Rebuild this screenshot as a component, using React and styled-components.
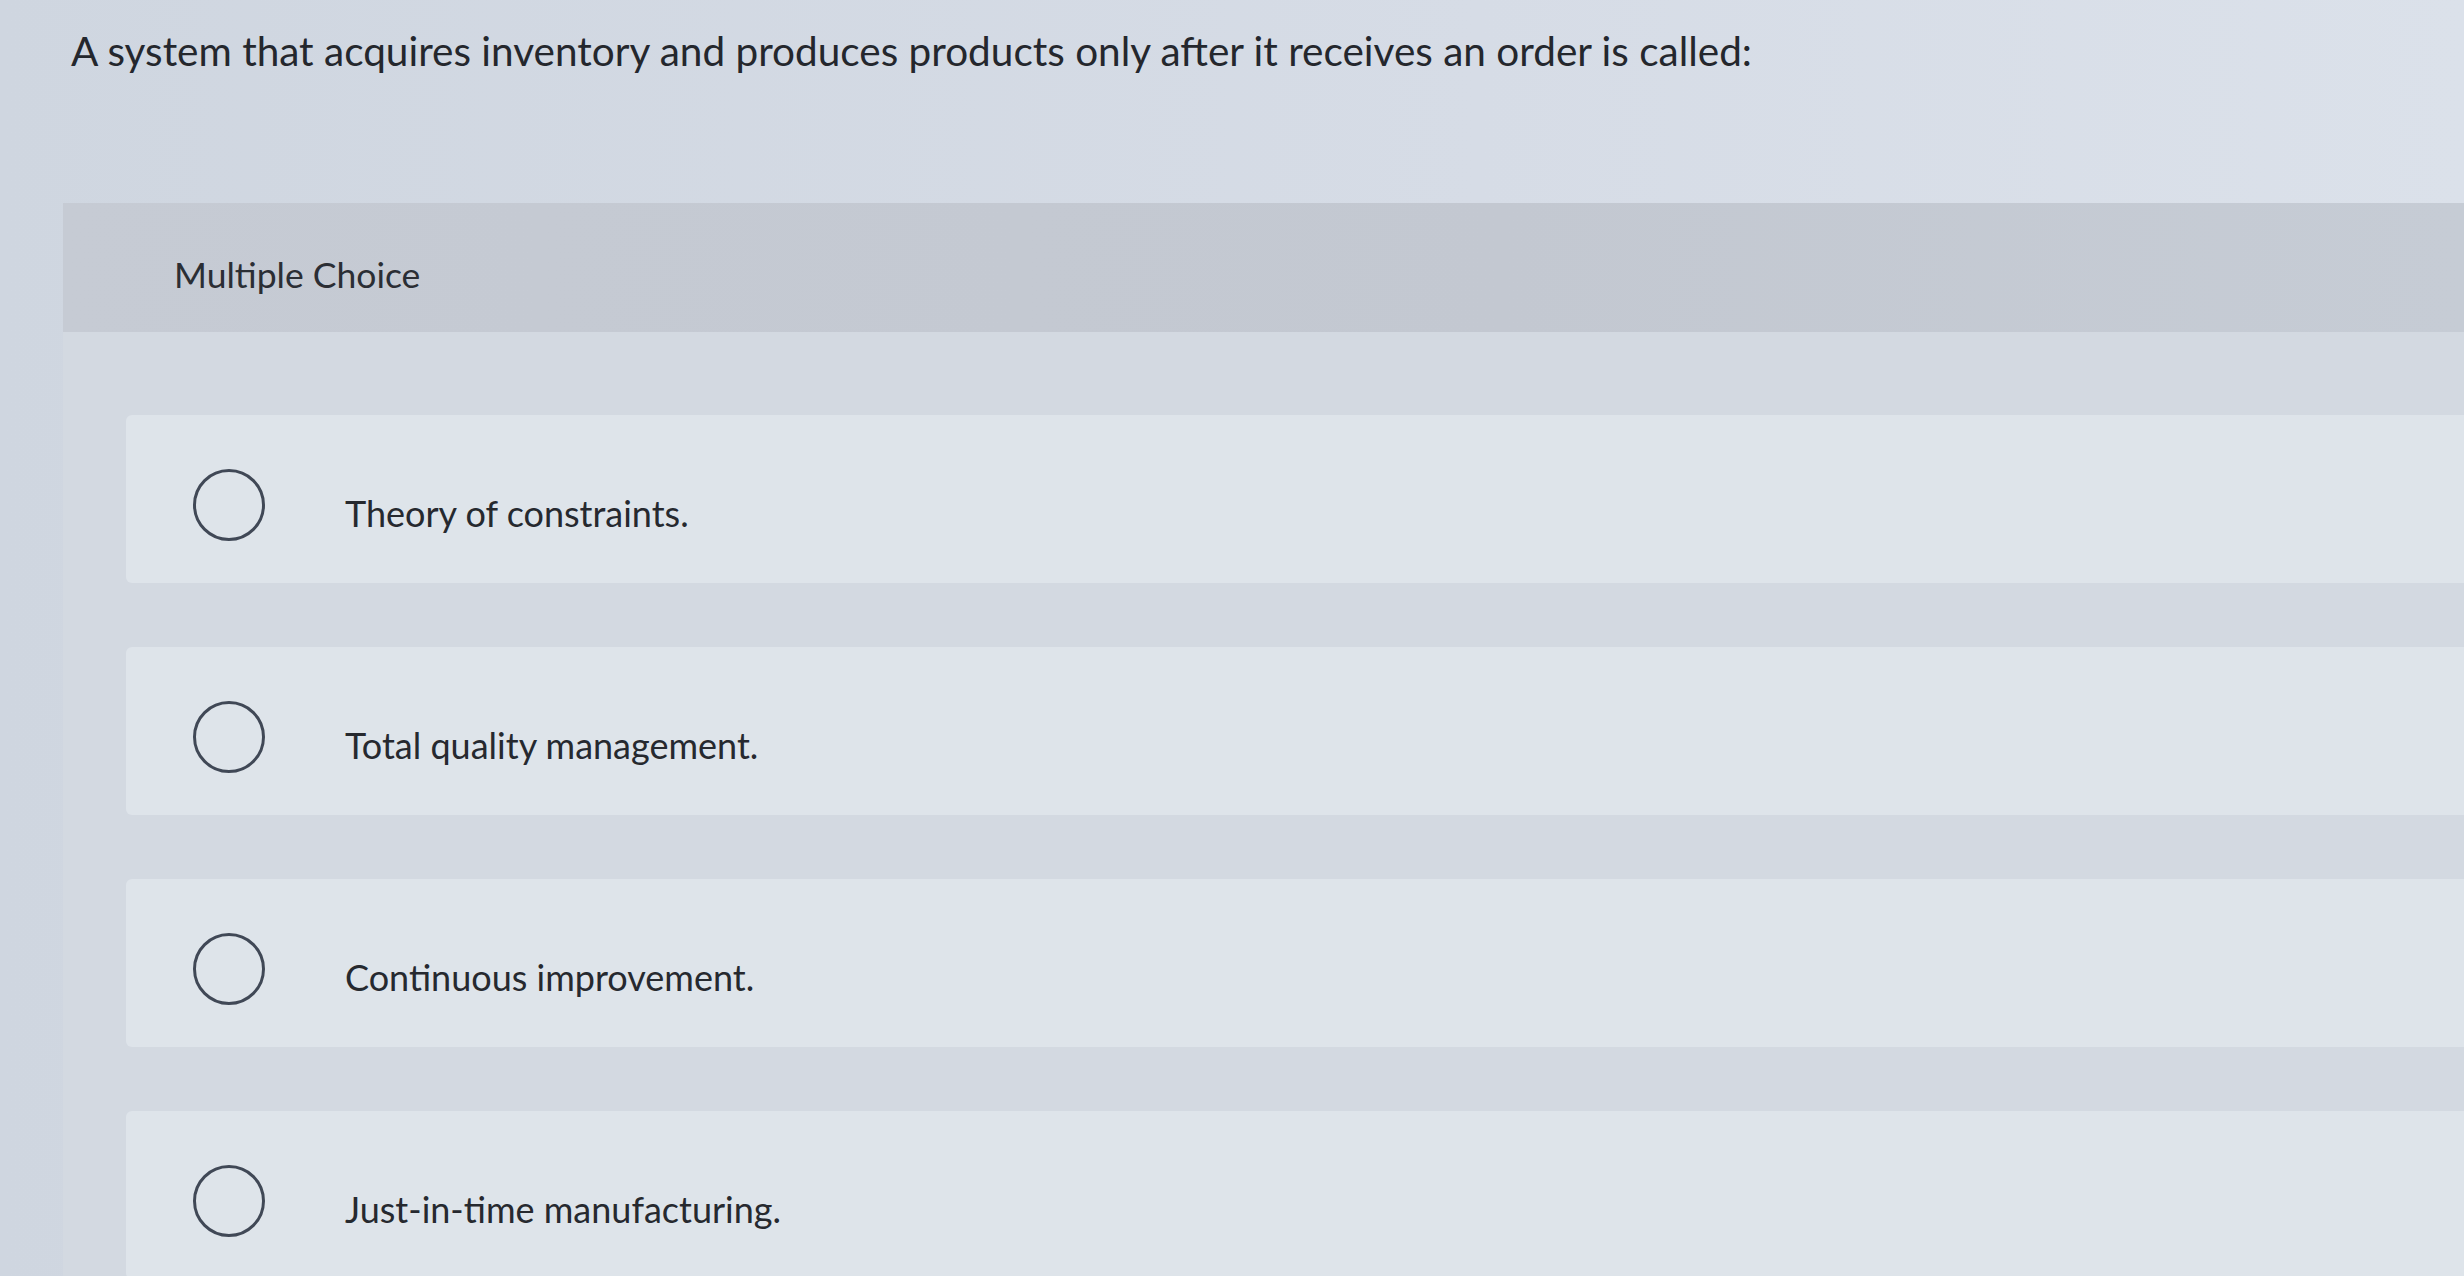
import styled, { createGlobalStyle } from "styled-components";

const GlobalStyle = createGlobalStyle`
  html, body {
    margin: 0;
    padding: 0;
    background: #d2d8e2;
    font-family: Lato, "Open Sans", "Liberation Sans", sans-serif;
    color: #2b2e34;
    overflow: hidden;
  }
`;

const options = [
  "Theory of constraints.",
  "Total quality management.",
  "Continuous improvement.",
  "Just-in-time manufacturing.",
];

export default function App() {
  return (
    <>
      <GlobalStyle />
      <Page>
        <Question>
          A system that acquires inventory and produces products only after it
          receives an order is called:
        </Question>
        <Panel>
          <PanelHeader>Multiple Choice</PanelHeader>
          <OptionList>
            {options.map((label) => (
              <OptionCard key={label}>
                <Radio />
                <OptionLabel>{label}</OptionLabel>
              </OptionCard>
            ))}
          </OptionList>
        </Panel>
      </Page>
    </>
  );
}

const Page = styled.main`
  width: 100vw;
  height: 100vh;
  box-sizing: border-box;
  padding: 29px 0 0 63px;
  display: flex;
  flex-direction: column;
  background: linear-gradient(90deg, #cfd6e0 0%, #d6dce6 60%, #dbe1ea 100%);
`;

const Question = styled.h1`
  margin: 0 0 130px 8px;
  font-size: 40.5px;
  line-height: 44px;
  font-weight: 400;
  color: #24272d;
  white-space: nowrap;
`;

const Panel = styled.section`
  display: flex;
  flex-direction: column;
  background: #d3d9e1;
  flex: 1;
`;

const PanelHeader = styled.div`
  height: 129px;
  box-sizing: border-box;
  padding: 13px 0 0 111px;
  display: flex;
  align-items: center;
  background: linear-gradient(90deg, #c6cbd4 0%, #c3c8d1 60%, #c6ccd5 100%);
  font-size: 35.5px;
  color: #2b2e34;
`;

const OptionList = styled.div`
  display: flex;
  flex-direction: column;
  gap: 64px;
  padding: 83px 0 0 63px;
`;

const OptionCard = styled.div`
  height: 168px;
  box-sizing: border-box;
  padding: 12px 0 0 67px;
  display: flex;
  align-items: center;
  gap: 80px;
  background: #dee4ea;
  border-radius: 6px 0 0 6px;
`;

const Radio = styled.span`
  width: 66px;
  height: 66px;
  flex: none;
  border: 3px solid #404856;
  border-radius: 50%;
`;

const OptionLabel = styled.span`
  font-size: 36px;
  color: #26292f;
  padding-top: 16px;
`;
